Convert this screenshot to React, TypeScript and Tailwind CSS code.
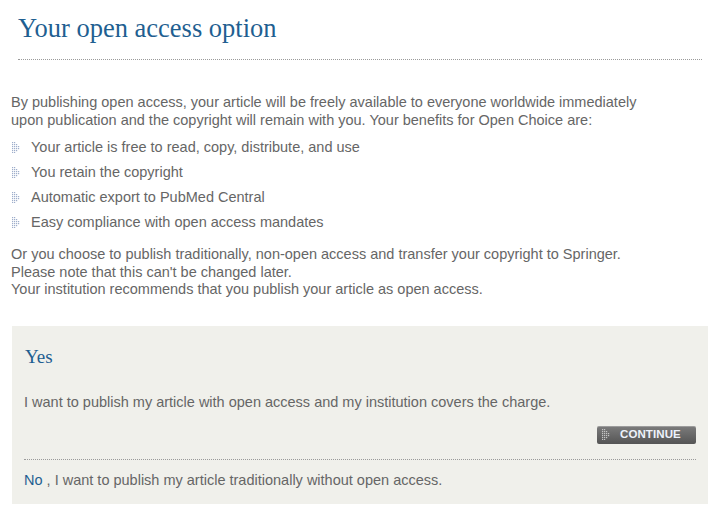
import React from 'react';

const benefits = [
  'Your article is free to read, copy, distribute, and use',
  'You retain the copyright',
  'Automatic export to PubMed Central',
  'Easy compliance with open access mandates',
];

function DotBullet({ color = '#9eaecb' }: { color?: string }) {
  // dotted arrow marker used by the old Springer styles
  const dots: [number, number][] = [];
  for (let y = 0; y <= 10; y += 2) {
    dots.push([0, y]);
    dots.push([2, y]);
  }
  dots.push([4, 2], [4, 4], [4, 6], [4, 8], [6, 4], [6, 6]);
  return (
    <svg width="8" height="11" viewBox="0 0 8 11" className="shrink-0">
      {dots.map(([x, y]) => (
        <rect key={`${x}-${y}`} x={x} y={y} width="1.2" height="1.2" fill={color} />
      ))}
    </svg>
  );
}

export default function App() {
  return (
    <div className="w-[720px] h-[518px] bg-white overflow-hidden font-['Liberation_Sans',Arial,sans-serif] text-[14.5px] text-[#666]">
      {/* Heading */}
      <div className="pt-[13px] px-[18px]">
        <h1 className="font-['Liberation_Serif','Times_New_Roman',serif] text-[26.5px] leading-[31px] text-[#1f5f91]">
          Your open access option
        </h1>
        <div className="mt-[15px] border-t border-dotted border-[#9a9a9a]" />
      </div>

      {/* Intro */}
      <div className="px-[11px] pt-[33px]">
        <p className="leading-[18px]">
          By publishing open access, your article will be freely available to everyone worldwide immediately
          <br />
          upon publication and the copyright will remain with you. Your benefits for Open Choice are:
        </p>
        <ul className="mt-[6px] flex flex-col">
          {benefits.map((b) => (
            <li key={b} className="flex items-center gap-[11px] h-[25px] pl-[1px]">
              <DotBullet />
              <span>{b}</span>
            </li>
          ))}
        </ul>
        <p className="mt-[11px] leading-[17.5px]">
          Or you choose to publish traditionally, non-open access and transfer your copyright to Springer.
          <br />
          Please note that this can't be changed later.
          <br />
          Your institution recommends that you publish your article as open access.
        </p>
      </div>

      {/* Choice box */}
      <div className="mx-[12px] mt-[27px] h-[178px] bg-[#f0f0eb] px-[12px] pt-[19px]">
        <h2 className="font-['Liberation_Serif','Times_New_Roman',serif] text-[19px] leading-[24px] text-[#1f5f91] pl-[1px]">
          Yes
        </h2>
        <p className="mt-[24px] leading-[18px]">
          I want to publish my article with open access and my institution covers the charge.
        </p>
        <div className="mt-[15px] flex justify-end">
          <button className="flex items-center gap-[10px] h-[18px] w-[99px] pl-[5px] rounded-[2px] bg-gradient-to-b from-[#7c7c7c] to-[#555] shadow-[inset_0_1px_0_rgba(255,255,255,0.25)] text-[11.5px] font-bold leading-none text-[#eef2fb] tracking-[0.1px]">
            <DotBullet color="#c4c4c4" />
            CONTINUE
          </button>
        </div>
        <div className="mt-[15px] border-t border-dotted border-[#9a9a9a]" />
        <p className="mt-[11px] leading-[18px]">
          <span className="text-[#1f5f91]">No</span> , I want to publish my article traditionally without open access.
        </p>
      </div>
    </div>
  );
}
